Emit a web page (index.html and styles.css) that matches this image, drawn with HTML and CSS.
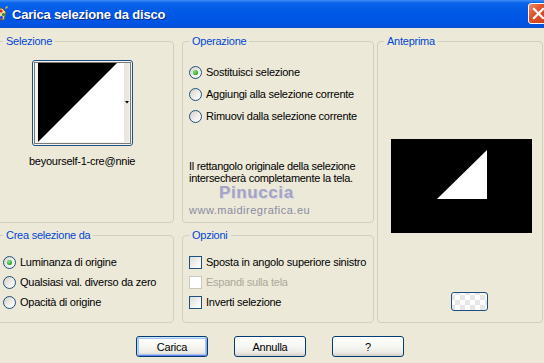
FILE: index.html
```html
<!DOCTYPE html>
<html lang="it">
<head>
    <meta charset="UTF-8">
    <title>Carica selezione da disco</title>
    <link rel="stylesheet" href="styles.css">
</head>
<body>
    <div class="titlebar">
        <svg class="appicon" width="16" height="16" viewBox="0 0 16 16">
            <path d="M2 3 L10 2 L14 6 L12 14 L4 13 Z" fill="#e9d8a6" stroke="#7a5a2a" stroke-width="1"/>
            <circle cx="9" cy="5" r="1.6" fill="#d62b1f"/>
            <circle cx="11.5" cy="8.5" r="1.6" fill="#2a8a2a"/>
            <circle cx="9.5" cy="11.5" r="1.6" fill="#1f4fd6"/>
            <path d="M13 2 L15 0 L16 1 L14 3 Z" fill="#f2c230"/>
        </svg>
        <span class="title">Carica selezione da disco</span>
        <span class="close">
            <svg width="13" height="13" viewBox="0 0 13 13">
                <path d="M2 2 L11 11 M11 2 L2 11" stroke="#fff" stroke-width="2.2" stroke-linecap="square"/>
            </svg>
        </span>
    </div>

    <div class="panels">
        <fieldset class="box sel">
            <legend>Selezione</legend>
            <div class="thumb">
                <svg width="99" height="84" viewBox="0 0 99 84">
                    <rect x="5" y="2" width="86" height="79" fill="#fff"/>
                    <path d="M5 2 L84 2 L5 81 Z" fill="#000"/>
                    <rect x="91" y="2" width="5" height="79" fill="#e9e7df"/>
                    <path d="M92 40 L96 40 L94 42.5 Z" fill="#000"/>
                    <rect x="1.5" y="1.5" width="96" height="81" fill="none" stroke="#000" stroke-width="1" stroke-dasharray="1 1"/>
                </svg>
            </div>
            <div class="thumbname">beyourself-1-cre@nnie</div>
        </fieldset>

        <fieldset class="box op">
            <legend>Operazione</legend>
            <div class="opts wide">
                <div class="opt"><span class="radio on"></span>Sostituisci selezione</div>
                <div class="opt"><span class="radio"></span>Aggiungi alla selezione corrente</div>
                <div class="opt"><span class="radio"></span>Rimuovi dalla selezione corrente</div>
            </div>
            <p class="note">Il rettangolo originale della selezione intersecherà completamente la tela.</p>
        </fieldset>

        <fieldset class="box prev">
            <legend>Anteprima</legend>
            <div class="canvas">
                <svg width="141" height="94" viewBox="0 0 141 94">
                    <rect width="141" height="94" fill="#000"/>
                    <path d="M46 60 L96 11 L96 60 Z" fill="#fff"/>
                </svg>
            </div>
            <div class="zoombtn"></div>
        </fieldset>

        <fieldset class="box crea">
            <legend>Crea selezione da</legend>
            <div class="opts">
                <div class="opt"><span class="radio on"></span>Luminanza di origine</div>
                <div class="opt"><span class="radio"></span>Qualsiasi val. diverso da zero</div>
                <div class="opt"><span class="radio"></span>Opacità di origine</div>
            </div>
        </fieldset>

        <fieldset class="box opz">
            <legend>Opzioni</legend>
            <div class="opts">
                <div class="opt"><span class="check"></span>Sposta in angolo superiore sinistro</div>
                <div class="opt off"><span class="check"></span>Espandi sulla tela</div>
                <div class="opt"><span class="check"></span>Inverti selezione</div>
            </div>
        </fieldset>
    </div>

    <div class="actions">
        <button class="btn default">Carica</button>
        <button class="btn">Annulla</button>
        <button class="btn">?</button>
    </div>

    <div class="watermark">
        <div class="wm-name">Pinuccia</div>
        <div class="wm-url">www.maidiregrafica.eu</div>
    </div>
</body>
</html>
```

FILE: styles.css
```css
*{
    box-sizing: border-box;
}
html, body{
    margin: 0;
    width: 544px;
    height: 363px;
    overflow: hidden;
}
body{
    position: relative;
    background: #ece9d8;
    font-family: "Liberation Sans", Arial, sans-serif;
    font-size: 11px;
    letter-spacing: -0.25px;
    color: #000;
}

/* barra del titolo */
.titlebar{
    height: 28px;
    display: flex;
    align-items: center;
    background: linear-gradient(#3f8ef5 0, #0a64ea 3px, #0058e6 45%, #0054e3 85%, #0a4fd0 100%);
}
.appicon{
    margin-left: -8px;
    flex: none;
}
.title{
    margin-left: 4px;
    color: #fff;
    font-size: 13px;
    font-weight: bold;
    letter-spacing: -0.2px;
    text-shadow: 1px 1px 0 #0a2c8a;
    flex: 1;
}
.close{
    width: 21px;
    height: 21px;
    margin-right: -5px;
    margin-top: -2px;
    border: 1px solid #fff;
    border-radius: 3px;
    background: linear-gradient(135deg, #f08a6a 0, #e0522c 40%, #c93d16 100%);
    display: flex;
    align-items: center;
    justify-content: center;
}

/* gruppi */
.panels{
    display: grid;
    grid-template-columns: 178px 200px 169px;
    grid-template-rows: 188px 94px;
    row-gap: 6px;
    margin-left: -4px;
    padding-top: 7px;
}
.box{
    margin: 0;
    min-width: 0;
    padding: 0 6px;
    border: 1px solid #d0d0bf;
    border-radius: 4px;
}
.box legend{
    padding: 0 3px;
    line-height: 13px;
    color: #0046d5;
}
.sel{ grid-column: 1; grid-row: 1; }
.op{ grid-column: 2; grid-row: 1; margin-left: 8px; }
.prev{ grid-column: 3; grid-row: 1 / 3; margin-left: 3px; }
.crea{ grid-column: 1; grid-row: 2; }
.opz{ grid-column: 2; grid-row: 2; margin-left: 8px; }

/* selezione */
.thumb{
    width: 101px;
    height: 86px;
    margin: 12px 0 0 29px;
    border: 1px solid #1c4f86;
    border-radius: 3px;
    background: #f4f3ee;
}
.thumb svg{
    display: block;
}
.thumbname{
    margin: 9px 0 0 26px;
    line-height: 13px;
}

/* opzioni */
.opts{
    margin-top: 10px;
}
.opts.wide{
    margin-top: 13px;
}
.opt{
    height: 20px;
    display: flex;
    align-items: center;
    gap: 4px;
    white-space: nowrap;
}
.wide .opt{
    height: 22px;
}
.opt.off{
    color: #aca899;
}
.radio{
    position: relative;
    width: 13px;
    height: 13px;
    flex: none;
    border: 1px solid #1c5180;
    border-radius: 50%;
    background: linear-gradient(135deg, #d4d1c6 0, #f2f1ec 60%, #fff 100%);
}
.radio.on::after{
    content: "";
    position: absolute;
    left: 3px;
    top: 3px;
    width: 5px;
    height: 5px;
    border-radius: 50%;
    background: radial-gradient(circle at 40% 35%, #8ee38e 0, #21a121 70%);
}
.check{
    width: 13px;
    height: 13px;
    flex: none;
    border: 1px solid #1c5180;
    background: linear-gradient(135deg, #dcdcd7 0, #f4f4f2 60%, #fff 100%);
}
.off .check{
    border-color: #cac8bb;
    background: #fff;
}
.note{
    margin: 33px 0 0;
    line-height: 12px;
    letter-spacing: -0.3px;
    padding-right: 8px;
}

/* anteprima */
.canvas{
    margin: 91px 0 0 7px;
}
.canvas svg{
    display: block;
}
.zoombtn{
    width: 37px;
    height: 19px;
    margin: 59px 0 0 67px;
    border: 1px solid #1c4f86;
    border-radius: 3px;
    background-color: #fdfdfd;
    background-image: conic-gradient(#e6e6e6 25%, transparent 0 50%, #e6e6e6 0 75%, transparent 0);
    background-size: 10px 10px;
    background-position: 3px 2px;
}

/* pulsanti */
.actions{
    display: flex;
    justify-content: center;
    gap: 26px;
    margin-top: 13px;
    padding-right: 4px;
}
.btn{
    width: 72px;
    height: 21px;
    padding: 0;
    border: 1px solid #003c74;
    border-radius: 3px;
    background: linear-gradient(#ffffff 0, #f6f6f2 50%, #ecebe5 80%, #d6d0c5 100%);
    font-family: "Liberation Sans", Arial, sans-serif;
    font-size: 11px;
    letter-spacing: -0.25px;
    color: #000;
}
.btn.default{
    box-shadow: inset 0 1px 0 #cee7ff, inset 1px 0 0 #bcd4f6, inset -1px 0 0 #89ade4, inset 0 -1px 0 #6982ee, inset 0 0 0 2px #a9c3f0;
}

/* filigrana sopra la finestra */
.watermark{
    position: absolute;
    left: 189px;
    top: 183px;
    pointer-events: none;
}
.wm-name{
    margin-left: 30px;
    font-size: 17px;
    font-weight: bold;
    letter-spacing: 0.6px;
    line-height: 20px;
    color: #a3a3c4;
    text-shadow: 1px 1px 0 #d8d6e2;
}
.wm-url{
    font-size: 11px;
    letter-spacing: 0.5px;
    line-height: 14px;
    color: #8b8ba2;
}
```
